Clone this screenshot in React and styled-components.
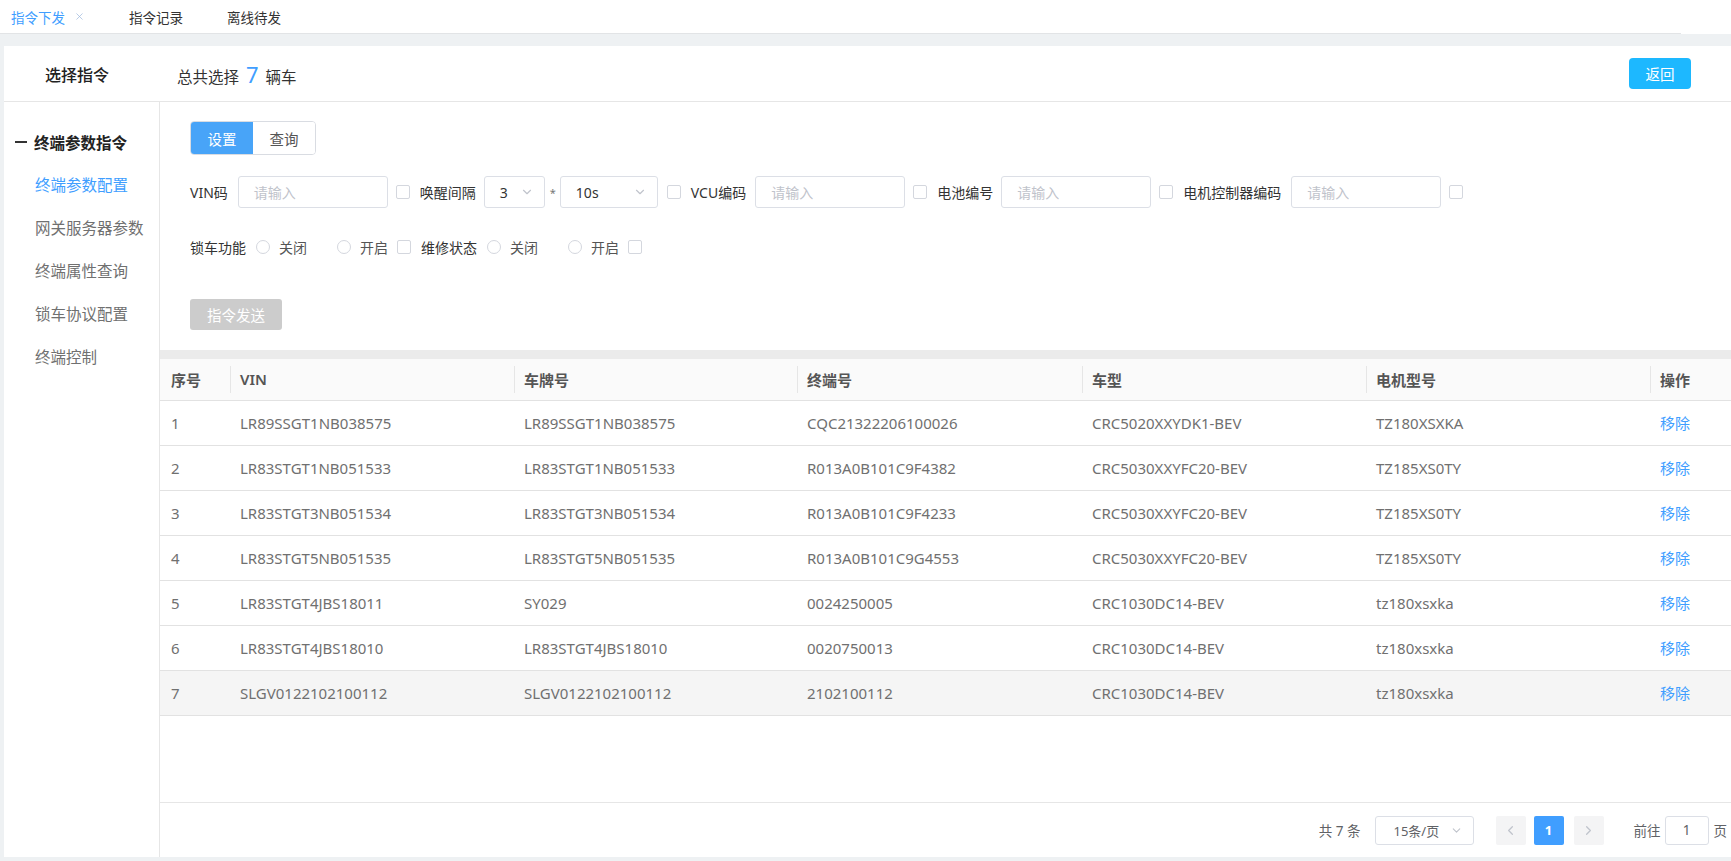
import React from 'react';
import styled, { createGlobalStyle } from 'styled-components';
import { ChevronDown, ChevronLeft, ChevronRight, X } from 'lucide-react';

const GlobalStyle = createGlobalStyle`
  html, body {
    margin: 0;
    padding: 0;
    background: #eef1f3;
    font-family: 'Noto Sans', 'Noto Sans CJK SC', sans-serif;
    color: #333;
  }
  * {
    box-sizing: border-box;
  }
`;

const Page = styled.div`
  display: flex;
  flex-direction: column;
  height: 861px;
  overflow: hidden;
`;

const TopStrip = styled.div`
  background: #fff;
  padding-right: 50px;
`;

const TabBar = styled.div`
  display: flex;
  align-items: center;
  height: 34px;
  border-bottom: 1px solid #e2e4e6;
`;

const Tab = styled.div`
  display: flex;
  align-items: center;
  gap: 9px;
  padding: 0 22px;
  font-size: 13.5px;
  color: ${(p) => (p.active ? '#409eff' : '#333')};

  &:first-child {
    padding-left: 11px;
  }
`;

const Card = styled.div`
  flex: 1;
  margin: 12px 0 4px 4px;
  background: #fff;
  display: flex;
  flex-direction: column;
  min-height: 0;
`;

const Header = styled.div`
  display: flex;
  align-items: center;
  height: 56px;
  padding: 0 40px 0 41px;
  border-bottom: 1px solid #e6e6e6;
`;

const HeaderTitle = styled.div`
  width: 132px;
  font-size: 16px;
  font-weight: 500;
  color: #222;
`;

const HeaderCount = styled.div`
  flex: 1;
  font-size: 15.5px;
  color: #333;
  display: flex;
  align-items: baseline;
  gap: 7px;
`;

const CountNum = styled.span`
  font-size: 22px;
  color: #409eff;
`;

const BackButton = styled.button`
  width: 62px;
  height: 31px;
  border: none;
  border-radius: 4px;
  background: #1db8ff;
  color: #fff;
  font-size: 14.5px;
  font-family: inherit;
`;

const Body = styled.div`
  flex: 1;
  display: flex;
  min-height: 0;
`;

const Sidebar = styled.div`
  width: 156px;
  border-right: 1px solid #e6e6e6;
  padding-top: 18px;
`;

const GroupTitle = styled.div`
  display: flex;
  align-items: center;
  height: 44px;
  padding-left: 11px;
  font-size: 15.5px;
  font-weight: 700;
  color: #222;
  gap: 7px;
`;

const Dash = styled.span`
  display: inline-block;
  width: 12px;
  height: 1.5px;
  background: #333;
`;

const SideItem = styled.div`
  height: 43px;
  line-height: 43px;
  padding-left: 31px;
  font-size: 15.5px;
  color: ${(p) => (p.active ? '#409eff' : '#707070')};
  white-space: nowrap;
`;

const Main = styled.div`
  flex: 1;
  display: flex;
  flex-direction: column;
  min-width: 0;
`;

const FormArea = styled.div`
  padding: 19px 0 20px 30px;
  display: flex;
  flex-direction: column;
`;

const Segmented = styled.div`
  display: flex;
  width: 126px;
  height: 34px;
  border: 1px solid #d9dce2;
  border-radius: 4px;
  overflow: hidden;
`;

const SegItem = styled.div`
  flex: 1;
  display: flex;
  align-items: center;
  justify-content: center;
  font-size: 14.5px;
  background: ${(p) => (p.active ? '#48a4f8' : '#fff')};
  color: ${(p) => (p.active ? '#fff' : '#555')};
`;

const FormRow = styled.div`
  display: flex;
  align-items: center;
  height: 32px;
  margin-top: ${(p) => p.top}px;
  font-size: 14px;
  color: #333;
  white-space: nowrap;
`;

const Label = styled.span`
  margin-right: ${(p) => (p.gap ?? 9)}px;
  font-size: 14px;
`;

const TextInput = styled.div`
  width: 150px;
  height: 32px;
  border: 1px solid #dcdfe6;
  border-radius: 3px;
  padding-left: 15px;
  display: flex;
  align-items: center;
  color: #bfc3cb;
  font-size: 14px;
  margin-right: 8px;
`;

const Select = styled.div`
  width: ${(p) => p.w}px;
  height: 32px;
  border: 1px solid #dcdfe6;
  border-radius: 3px;
  padding: 0 10px 0 15px;
  display: flex;
  align-items: center;
  justify-content: space-between;
  font-size: 14px;
  color: #333;
  margin-right: ${(p) => (p.mr ?? 8)}px;
`;

const Star = styled.span`
  margin-right: 4px;
  color: #777;
  font-size: 11px;
`;

const Checkbox = styled.span`
  display: inline-block;
  width: 14px;
  height: 14px;
  border: 1px solid #d4d7de;
  border-radius: 2px;
  background: #fff;
  margin-right: 10px;
`;

const RadioWrap = styled.span`
  display: inline-flex;
  align-items: center;
  gap: 9px;
  margin-right: ${(p) => (p.last ? 9 : 30)}px;
  font-size: 14px;
  color: #555;
`;

const RadioDot = styled.span`
  display: inline-block;
  width: 14px;
  height: 14px;
  border: 1px solid #d4d7de;
  border-radius: 50%;
`;

const SendButton = styled.button`
  margin-top: 36px;
  width: 92px;
  height: 31px;
  border: none;
  border-radius: 3px;
  background: #cccccc;
  color: #fff;
  font-size: 14.5px;
  font-family: inherit;
`;

const Band = styled.div`
  height: 9px;
  background: #ebebeb;
`;

const Table = styled.table`
  width: 100%;
  border-collapse: collapse;
  table-layout: fixed;
  font-size: 15px;
`;

const Th = styled.th`
  position: relative;
  height: 41px;
  padding: 0 0 0 ${(p) => (p.first ? 11 : 10)}px;
  text-align: left;
  font-weight: 600;
  color: #555;
  background: #fafafa;
  border-bottom: 1px solid #e2e2e2;

  &:not(:first-child)::before {
    content: '';
    position: absolute;
    left: 0;
    top: 7px;
    bottom: 7px;
    width: 1px;
    background: #e6e6e6;
  }
`;

const Tr = styled.tr`
  background: ${(p) => (p.hover ? '#f5f5f5' : '#fff')};
`;

const Td = styled.td`
  height: 45px;
  padding: 0 0 0 ${(p) => (p.first ? 11 : 10)}px;
  color: #707070;
  border-bottom: 1px solid #e2e2e2;
  white-space: nowrap;
  overflow: hidden;
`;

const RemoveLink = styled.span`
  color: #409eff;
`;

const Spacer = styled.div`
  flex: 1;
`;

const Pager = styled.div`
  height: 55px;
  border-top: 1px solid #e6e6e6;
  display: flex;
  align-items: center;
  justify-content: flex-end;
  padding-right: 4px;
  font-size: 13.5px;
  color: #606266;
`;

const Total = styled.span`
  margin-right: 14px;
`;

const PageSize = styled.div`
  width: 99px;
  height: 29px;
  border: 1px solid #dcdfe6;
  border-radius: 3px;
  display: flex;
  align-items: center;
  justify-content: space-between;
  padding: 0 10px 0 18px;
  margin-right: 22px;
  color: #606266;
  font-size: 13px;
`;

const PageBtn = styled.div`
  width: 30px;
  height: 29px;
  border-radius: 2px;
  display: flex;
  align-items: center;
  justify-content: center;
  margin-right: ${(p) => (p.mr ?? 8)}px;
  background: ${(p) => (p.active ? '#409eff' : '#f4f4f5')};
  color: ${(p) => (p.active ? '#fff' : '#c0c4cc')};
  font-weight: ${(p) => (p.active ? 700 : 400)};
  font-size: 13px;
`;

const Jump = styled.div`
  width: 44px;
  height: 29px;
  border: 1px solid #dcdfe6;
  border-radius: 3px;
  margin: 0 5px 0 4px;
  display: flex;
  align-items: center;
  justify-content: center;
  color: #606266;
`;

const rows = [
  ['1', 'LR89SSGT1NB038575', 'LR89SSGT1NB038575', 'CQC21322206100026', 'CRC5020XXYDK1-BEV', 'TZ180XSXKA'],
  ['2', 'LR83STGT1NB051533', 'LR83STGT1NB051533', 'R013A0B101C9F4382', 'CRC5030XXYFC20-BEV', 'TZ185XS0TY'],
  ['3', 'LR83STGT3NB051534', 'LR83STGT3NB051534', 'R013A0B101C9F4233', 'CRC5030XXYFC20-BEV', 'TZ185XS0TY'],
  ['4', 'LR83STGT5NB051535', 'LR83STGT5NB051535', 'R013A0B101C9G4553', 'CRC5030XXYFC20-BEV', 'TZ185XS0TY'],
  ['5', 'LR83STGT4JBS18011', 'SY029', '0024250005', 'CRC1030DC14-BEV', 'tz180xsxka'],
  ['6', 'LR83STGT4JBS18010', 'LR83STGT4JBS18010', '0020750013', 'CRC1030DC14-BEV', 'tz180xsxka'],
  ['7', 'SLGV0122102100112', 'SLGV0122102100112', '2102100112', 'CRC1030DC14-BEV', 'tz180xsxka'],
];

const menu = ['终端参数配置', '网关服务器参数', '终端属性查询', '锁车协议配置', '终端控制'];

function App() {
  return (
    <Page>
      <GlobalStyle />
      <TopStrip>
        <TabBar>
          <Tab active>
            指令下发 <X size={11} strokeWidth={1.5} color="#9bb6dc" />
          </Tab>
          <Tab>指令记录</Tab>
          <Tab>离线待发</Tab>
        </TabBar>
      </TopStrip>

      <Card>
        <Header>
          <HeaderTitle>选择指令</HeaderTitle>
          <HeaderCount>
            总共选择 <CountNum>7</CountNum> 辆车
          </HeaderCount>
          <BackButton>返回</BackButton>
        </Header>

        <Body>
          <Sidebar>
            <GroupTitle>
              <Dash />
              终端参数指令
            </GroupTitle>
            {menu.map((m, i) => (
              <SideItem key={m} active={i === 0}>
                {m}
              </SideItem>
            ))}
          </Sidebar>

          <Main>
            <FormArea>
              <Segmented>
                <SegItem active>设置</SegItem>
                <SegItem>查询</SegItem>
              </Segmented>

              <FormRow top={21}>
                <Label gap={10}>VIN码</Label>
                <TextInput>请输入</TextInput>
                <Checkbox />
                <Label gap={8}>唤醒间隔</Label>
                <Select w={61} mr={5}>
                  3 <ChevronDown size={14} color="#c0c4cc" />
                </Select>
                <Star>*</Star>
                <Select w={98} mr={9}>
                  10s <ChevronDown size={14} color="#c0c4cc" />
                </Select>
                <Checkbox />
                <Label gap={9}>VCU编码</Label>
                <TextInput>请输入</TextInput>
                <Checkbox />
                <Label gap={8}>电池编号</Label>
                <TextInput>请输入</TextInput>
                <Checkbox />
                <Label gap={10}>电机控制器编码</Label>
                <TextInput>请输入</TextInput>
                <Checkbox />
              </FormRow>

              <FormRow top={23}>
                <Label gap={10}>锁车功能</Label>
                <RadioWrap>
                  <RadioDot />
                  关闭
                </RadioWrap>
                <RadioWrap last>
                  <RadioDot />
                  开启
                </RadioWrap>
                <Checkbox />
                <Label gap={10}>维修状态</Label>
                <RadioWrap>
                  <RadioDot />
                  关闭
                </RadioWrap>
                <RadioWrap last>
                  <RadioDot />
                  开启
                </RadioWrap>
                <Checkbox />
              </FormRow>

              <div>
                <SendButton>指令发送</SendButton>
              </div>
            </FormArea>

            <Band />

            <Table>
              <colgroup>
                <col style={{ width: 70 }} />
                <col style={{ width: 284 }} />
                <col style={{ width: 283 }} />
                <col style={{ width: 285 }} />
                <col style={{ width: 284 }} />
                <col style={{ width: 284 }} />
                <col />
              </colgroup>
              <thead>
                <tr>
                  <Th first>序号</Th>
                  <Th>VIN</Th>
                  <Th>车牌号</Th>
                  <Th>终端号</Th>
                  <Th>车型</Th>
                  <Th>电机型号</Th>
                  <Th>操作</Th>
                </tr>
              </thead>
              <tbody>
                {rows.map((r, i) => (
                  <Tr key={r[0]} hover={i === rows.length - 1}>
                    {r.map((c, j) => (
                      <Td key={j} first={j === 0}>
                        {c}
                      </Td>
                    ))}
                    <Td>
                      <RemoveLink>移除</RemoveLink>
                    </Td>
                  </Tr>
                ))}
              </tbody>
            </Table>

            <Spacer />

            <Pager>
              <Total>共 7 条</Total>
              <PageSize>
                15条/页 <ChevronDown size={13} color="#c0c4cc" />
              </PageSize>
              <PageBtn>
                <ChevronLeft size={15} />
              </PageBtn>
              <PageBtn active mr={10}>
                1
              </PageBtn>
              <PageBtn mr={30}>
                <ChevronRight size={15} />
              </PageBtn>
              <span>前往</span>
              <Jump>1</Jump>
              <span>页</span>
            </Pager>
          </Main>
        </Body>
      </Card>
    </Page>
  );
}

export default App;
